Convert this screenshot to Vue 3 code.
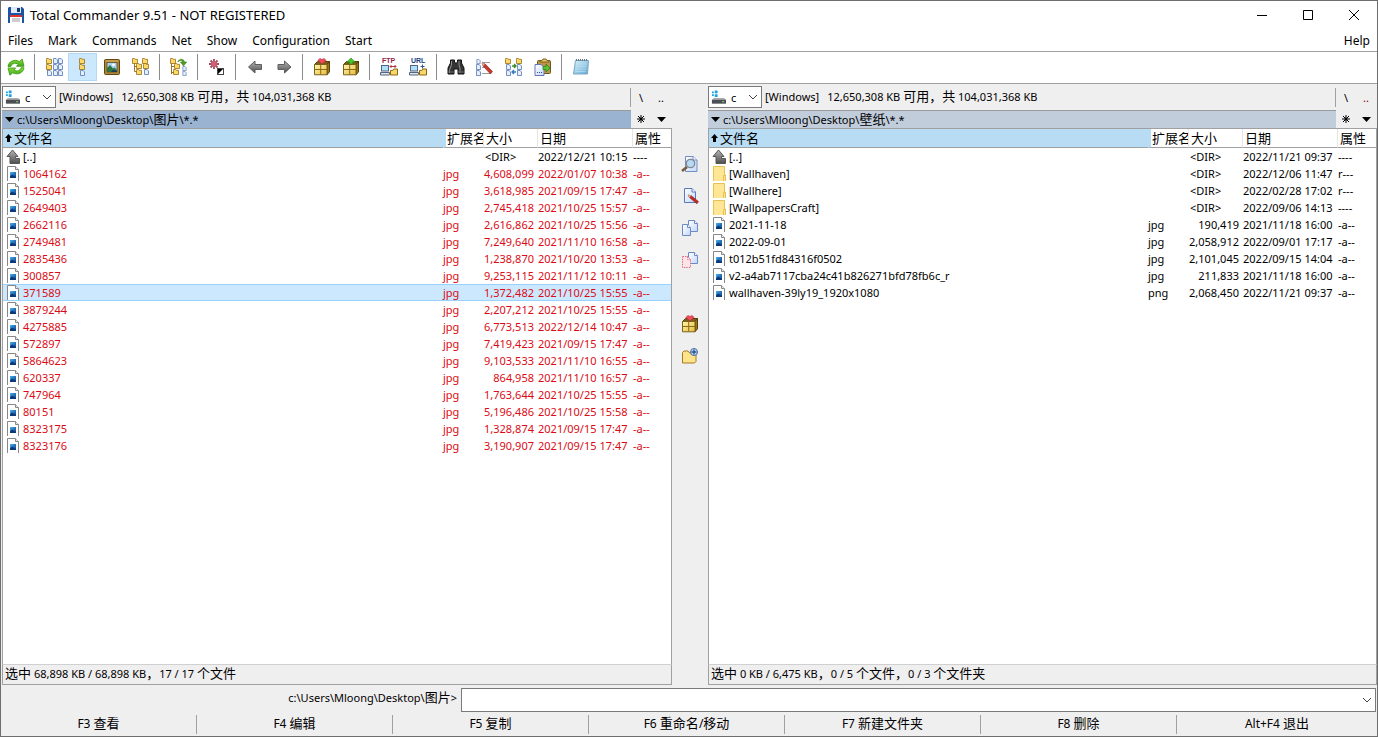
<script setup>
import { h, ref, reactive } from 'vue'

// Renders mixed text: Chinese runs are set slightly larger than Latin ones.
const Mixed = (props) =>
  props.text
    .split(/([\u3000-\u9fff\uff00-\uffef]+)/)
    .filter(Boolean)
    .map((part) => (/[\u3000-\uffef]/.test(part) ? h('span', { class: 'han' }, part) : part))
Mixed.props = ['text']

const menu = ['Files', 'Mark', 'Commands', 'Net', 'Show', 'Configuration', 'Start']

const tools = [
  ['refresh', 'Refresh'], null,
  ['brief', 'Brief view'], ['full', 'Full view'], ['thumbs', 'Thumbnails'], ['tree', 'Tree'], null,
  ['branch', 'Branch view'], null,
  ['invert', 'Invert selection'], null,
  ['back', 'Back'], ['forward', 'Forward'], null,
  ['pack', 'Pack'], ['unpack', 'Unpack'], null,
  ['ftp', 'FTP connect', 'FTP', '#942347'], ['url', 'New URL', 'URL', '#14437f'], null,
  ['search', 'Search'], ['rename', 'Multi-rename'], ['sync', 'Synchronize'], ['clip', 'Copy names'], null,
  ['notepad', 'Notepad'],
]

const L = [
  ['1064162', '4,608,099', '2022/01/07 10:38'],
  ['1525041', '3,618,985', '2021/09/15 17:47'],
  ['2649403', '2,745,418', '2021/10/25 15:57'],
  ['2662116', '2,616,862', '2021/10/25 15:56'],
  ['2749481', '7,249,640', '2021/11/10 16:58'],
  ['2835436', '1,238,870', '2021/10/20 13:53'],
  ['300857', '9,253,115', '2021/11/12 10:11'],
  ['371589', '1,372,482', '2021/10/25 15:55'],
  ['3879244', '2,207,212', '2021/10/25 15:55'],
  ['4275885', '6,773,513', '2022/12/14 10:47'],
  ['572897', '7,419,423', '2021/09/15 17:47'],
  ['5864623', '9,103,533', '2021/11/10 16:55'],
  ['620337', '864,958', '2021/11/10 16:57'],
  ['747964', '1,763,644', '2021/10/25 15:55'],
  ['80151', '5,196,486', '2021/10/25 15:58'],
  ['8323175', '1,328,874', '2021/09/15 17:47'],
  ['8323176', '3,190,907', '2021/09/15 17:47'],
]
const file = (name, ext, size, date) => ({ icon: 'image', name, ext, size, date, attr: '-a--' })
const dir = (icon, name, date, attr) => ({ icon, name, ext: '', size: '<DIR>', date, attr })

const panels = reactive([
  {
    side: 'left', active: true, path: 'c:\\Users\\Mloong\\Desktop\\图片\\*.*', current: 8, marked: true,
    status: '选中 68,898 KB / 68,898 KB，17 / 17 个文件',
    rows: [dir('up', '[..]', '2022/12/21 10:15', '----'), ...L.map((r) => file(r[0], 'jpg', r[1], r[2]))],
  },
  {
    side: 'right', active: false, path: 'c:\\Users\\Mloong\\Desktop\\壁纸\\*.*', current: -1, marked: false,
    status: '选中 0 KB / 6,475 KB，0 / 5 个文件，0 / 3 个文件夹',
    rows: [
      dir('up', '[..]', '2022/11/21 09:37', '----'),
      dir('folder', '[Wallhaven]', '2022/12/06 11:47', 'r---'),
      dir('folder', '[Wallhere]', '2022/02/28 17:02', 'r---'),
      dir('folder', '[WallpapersCraft]', '2022/09/06 14:13', '----'),
      file('2021-11-18', 'jpg', '190,419', '2021/11/18 16:00'),
      file('2022-09-01', 'jpg', '2,058,912', '2022/09/01 17:17'),
      file('t012b51fd84316f0502', 'jpg', '2,101,045', '2022/09/15 14:04'),
      file('v2-a4ab7117cba24c41b826271bfd78fb6c_r', 'jpg', '211,833', '2021/11/18 16:00'),
      file('wallhaven-39ly19_1920x1080', 'png', '2,068,450', '2022/11/21 09:37'),
    ],
  },
])

const side = [['view', 'View'], ['edit', 'Edit'], ['copy', 'Copy'], ['move', 'Move'], null, ['pack', 'Pack'], ['mkdir', 'New folder']]
const keys = ['F3 查看', 'F4 编辑', 'F5 复制', 'F6 重命名/移动', 'F7 新建文件夹', 'F8 删除', 'Alt+F4 退出']
const command = ref('')
</script>

<template>
  <div class="window">
    <svg class="defs" aria-hidden="true">
      <defs>
        <linearGradient id="gGreen" x1="0" y1="0" x2="0" y2="1"><stop offset="0" stop-color="#8be03a" /><stop offset="1" stop-color="#3da714" /></linearGradient>
        <linearGradient id="gGrey" x1="0" y1="0" x2="0" y2="1"><stop offset="0" stop-color="#b5b5b5" /><stop offset="1" stop-color="#4e4e4e" /></linearGradient>
        <linearGradient id="gBox" x1="0" y1="0" x2="1" y2="1"><stop offset="0" stop-color="#fff6ae" /><stop offset="1" stop-color="#e6bc3c" /></linearGradient>
        <linearGradient id="gPage" x1="0" y1="0" x2="1" y2="1"><stop offset="0" stop-color="#fff" /><stop offset="1" stop-color="#c3d8fa" /></linearGradient>
        <linearGradient id="gPhoto" x1="0" y1="0" x2="1" y2="1"><stop offset="0" stop-color="#4ab0f2" /><stop offset="1" stop-color="#0a3c80" /></linearGradient>
        <linearGradient id="gNote" x1="0" y1="0" x2="1" y2="1"><stop offset="0" stop-color="#d8f2fb" /><stop offset="1" stop-color="#62a8d4" /></linearGradient>
      </defs>
      <symbol id="fold" viewBox="0 0 6 6"><path d="M.5 1.500V.500h2l.6.800h2.400v4.200h-5z" fill="#ffd966" stroke="#94701a" stroke-width=".8" /></symbol>
      <symbol id="doc" viewBox="0 0 5 6"><path d="M.5.5h2.600L4.500 2v3.500h-4z" fill="#e6efff" stroke="#5677b4" stroke-width=".8" /></symbol>
      <symbol id="refresh" viewBox="0 0 20 20">
        <path d="M2 9.500C2.500 4.500 8.500 1.500 13.500 4.600L16.200 2 18 9.300H10.400L12.300 7.300C9 5.100 5.600 6.800 4.900 9.500z" fill="url(#gGreen)" stroke="#379217" stroke-width=".8" />
        <path d="M18 10.700C17.500 15.700 11.500 18.500 6.700 15.800L3.900 18.200 2 11h7.600L7.800 13c3.200 2 6.500.6 7.200-2.300z" fill="url(#gGreen)" stroke="#379217" stroke-width=".8" />
      </symbol>
      <symbol id="brief" viewBox="0 0 20 20">
        <path d="M3.500 5v11H6M3.500 10H6" fill="none" stroke="#c29a36" />
        <use href="#fold" x="2" y="1" width="6" height="6" /><use href="#fold" x="2" y="7" width="6" height="6" /><use href="#doc" x="3" y="13" width="5" height="6" />
        <use href="#doc" x="9" y="1" width="5" height="6" /><use href="#doc" x="9" y="7" width="5" height="6" /><use href="#doc" x="9" y="13" width="5" height="6" />
        <use href="#doc" x="14" y="1" width="5" height="6" /><use href="#doc" x="14" y="7" width="5" height="6" /><use href="#doc" x="14" y="13" width="5" height="6" />
      </symbol>
      <symbol id="full" viewBox="0 0 20 20">
        <use href="#fold" x="6" y="1" width="6" height="6" /><use href="#fold" x="6" y="7" width="6" height="6" /><use href="#doc" x="7" y="13" width="5" height="6" />
      </symbol>
      <symbol id="thumbs" viewBox="0 0 20 20">
        <rect x="2.500" y="2.500" width="15" height="15" rx="1" fill="#b0873a" stroke="#634713" /><path d="M4 4h12" stroke="#dfb961" />
        <rect x="5" y="5.500" width="10" height="9.500" fill="#a9d2f0" stroke="#5b431a" stroke-width=".7" />
        <path d="M5 11l3-3 3 3.500 1.500-1L15 13v2H5z" fill="#2c7440" /><path d="M9 15l2-2 4 1v1z" fill="#193762" /><circle cx="11.500" cy="7.800" r="1.400" fill="#fff" />
      </symbol>
      <symbol id="tree" viewBox="0 0 20 20">
        <path d="M3.500 5v9.500h4M3.500 9.500h4M14.500 5v10" fill="none" stroke="#9b7726" />
        <use href="#fold" x="1" y="1" width="6" height="6" /><use href="#fold" x="5" y="6" width="6" height="6" /><use href="#fold" x="5" y="12" width="6" height="6" />
        <use href="#fold" x="11" y="1" width="6" height="6" /><use href="#fold" x="12" y="6" width="6" height="6" /><use href="#doc" x="13" y="12" width="5" height="6" />
      </symbol>
      <symbol id="branch" viewBox="0 0 20 20">
        <path d="M2.500 2v15M2.500 9.500H5M2.500 15.500H5" fill="none" stroke="#927226" />
        <use href="#fold" x="1" y="1" width="6" height="6" /><use href="#fold" x="5" y="6" width="6" height="6" /><use href="#fold" x="4" y="12" width="6" height="6" />
        <path d="M9 4c3-3 6-2 6.500 1h2.200L14.500 9 11.500 5h2C13 3 11 3 9 5z" fill="#4aa01d" stroke="#2f7512" stroke-width=".5" />
        <use href="#doc" x="13" y="9" width="5" height="5" /><use href="#doc" x="13" y="14" width="5" height="5" />
      </symbol>
      <symbol id="invert" viewBox="0 0 20 20">
        <g stroke="#a8485e" stroke-width="1.800"><path d="M7 2v10M2 7h10M3.500 3.500l7 7M10.500 3.500l-7 7" /></g><circle cx="7" cy="7" r="2.800" fill="#cf6177" />
        <rect x="10.500" y="11.500" width="6" height="6" fill="#fff" stroke="#444" /><path d="M11 12h5l-5 5z" />
      </symbol>
      <symbol id="back" viewBox="0 0 20 20"><path d="M3.500 10L10 4v3.500h6.500v5H10V16z" fill="url(#gGrey)" stroke="#5e5e5e" /></symbol>
      <symbol id="forward" viewBox="0 0 20 20"><path d="M17 10l-6.500-6v3.500H4v5h6.500V16z" fill="url(#gGrey)" stroke="#5e5e5e" /></symbol>
      <symbol id="box" viewBox="0 0 20 20">
        <path d="M2.500 7.500l3-3h12l-2.500 3z" fill="#7a6018" stroke="#574109" /><path d="M15 7.500l2.500-3v10.300l-2.500 3z" fill="#9b7418" stroke="#574109" />
        <path d="M2.500 7.500H15v10.300H2.500z" fill="url(#gBox)" stroke="#7d611a" /><path d="M8.700 7.500v10M2.500 12.500H15" stroke="#8b6b18" />
      </symbol>
      <symbol id="pack" viewBox="0 0 20 20"><use href="#box" width="20" height="20" /><path d="M10 7L5.800 3.500 8 1.500l2 1 2-1 2.200 2z" fill="#ef4c5b" stroke="#b92535" stroke-width=".6" /></symbol>
      <symbol id="unpack" viewBox="0 0 20 20"><use href="#box" width="20" height="20" /><path d="M10 1L5.800 5H8.300v2h3.400V5h2.500z" fill="#49c72e" stroke="#27841a" stroke-width=".6" /></symbol>
      <symbol id="net" viewBox="0 0 20 20">
        <rect x="2.500" y="8.500" width="7" height="5.500" fill="#afe0fa" stroke="#55657f" /><path d="M1.500 15.500h9v2.500h-9z" fill="#dce5ee" stroke="#55657f" /><path d="M10 17.500h4" stroke="#bb8e20" />
        <path d="M11.500 13.500h2.200l1-1.500h3.800v6h-7z" fill="#f9d76b" stroke="#876617" />
      </symbol>
      <symbol id="ftp" viewBox="0 0 20 20"><use href="#net" width="20" height="20" /><path d="M11 9.500h6M12.500 8L11 9.500l1.500 1.500M15.500 8L17 9.500 15.500 11" fill="none" stroke="#b43547" /></symbol>
      <symbol id="url" viewBox="0 0 20 20"><use href="#net" width="20" height="20" /><path d="M14.500 7.500v4M12.500 9.500h4" stroke="#36558b" /></symbol>
      <symbol id="search" viewBox="0 0 20 20">
        <path d="M4.500 3h4v2l1 1h1l1-1V3h4v3l2.500 5v6h-6v-5H8v5H2v-6l2.500-5z" fill="#343434" stroke="#111" />
        <path d="M5.500 4v4L3.500 13v3M13 4v4l1 3v5" fill="none" stroke="#8d8d8d" /><path d="M2 15h6M12 15h6" stroke="#666" />
      </symbol>
      <symbol id="rename" viewBox="0 0 20 20">
        <use href="#doc" x="1" y="2" width="5" height="5" /><use href="#doc" x="1" y="7" width="5" height="6" /><use href="#doc" x="1" y="13" width="5" height="6" />
        <path d="M7 5.500h8M7 10.500h4M7 16.500h9" stroke="#9b9b9b" /><path d="M7 6l3 .8 7.500 7.700-2 2.500L8 9z" fill="#c8392c" stroke="#7e2019" stroke-width=".6" /><path d="M7 6l3 .8L8 9z" fill="#f3c39b" />
      </symbol>
      <symbol id="sync" viewBox="0 0 20 20">
        <use href="#fold" x="1" y="1" width="6" height="6" /><use href="#fold" x="12" y="1" width="6" height="6" />
        <use href="#doc" x="2" y="7" width="5" height="6" /><use href="#doc" x="13" y="7" width="5" height="6" /><use href="#doc" x="2" y="13" width="5" height="6" /><use href="#doc" x="13" y="13" width="5" height="6" />
        <path d="M8 9h4M10 7l2 2-2 2" fill="none" stroke="#388c20" stroke-width="1.300" /><path d="M12 15H8M10 13l-2 2 2 2" fill="none" stroke="#347abb" stroke-width="1.300" />
      </symbol>
      <symbol id="clip" viewBox="0 0 20 20">
        <rect x="4.500" y="3.500" width="13" height="13" rx="1" fill="#bd9547" stroke="#6f541f" /><path d="M7 5V3.500h2L10 2h3l1 1.500h2V5z" fill="#ebc772" stroke="#79601e" />
        <path d="M2 7.500h6l3 2.500v8.500H2z" fill="url(#gPage)" stroke="#6676b5" /><path d="M4 15.500h1M6 15.500h1M8 15.500h1" stroke="#334f99" /><path d="M10 9.500h3V7l4 4-4 4v-2.500h-3z" fill="#53c634" stroke="#297d15" stroke-width=".7" />
      </symbol>
      <symbol id="notepad" viewBox="0 0 20 20"><path d="M4.500 3.500h13l-1 13.500H2.500z" fill="url(#gNote)" stroke="#7aa9c6" /><path d="M5.500 4V2M7.500 4V2M9.500 4V2M11.500 4V2M13.500 4V2M15.500 4V2" stroke="#637783" /><path d="M6 7h9.500M5.500 9.500H15M5 12h10M4.500 14.500h10" stroke="#c5e6f4" stroke-width=".6" /></symbol>
      <symbol id="view" viewBox="0 0 20 20">
        <path d="M5.500 2.500H13L17 6v11.500H5.500z" fill="url(#gPage)" stroke="#748dc4" /><path d="M13 2.500V6h4" fill="#fff" stroke="#748dc4" /><path d="M7 13l-5 4" stroke="#785b41" stroke-width="2.600" /><circle cx="10.500" cy="9.500" r="4.200" fill="#b6daf4" stroke="#7f8790" stroke-width="1.300" />
      </symbol>
      <symbol id="edit" viewBox="0 0 20 20"><path d="M4.500 2.500H12L15.500 6v10.500h-11z" fill="url(#gPage)" stroke="#577abb" /><path d="M12 2.500V6h3.500" fill="#fff" stroke="#577abb" /><path d="M8 9l3 .6 7.500 6-1.600 2.200L9.500 11.500z" fill="#c42a24" stroke="#7d211c" stroke-width=".6" /><path d="M8 9l3 .6-1.500 1.900z" fill="#efc69c" /></symbol>
      <symbol id="copy" viewBox="0 0 20 20"><path d="M8.500 2.500h6l3 3v8h-9z" fill="url(#gPage)" stroke="#6c8ac6" /><path d="M2.500 6.500h5l3 3v8h-8z" fill="url(#gPage)" stroke="#6c8ac6" /><path d="M7.500 6.500v3h3M14.500 2.500v3h3" fill="#fff" stroke="#6c8ac6" /></symbol>
      <symbol id="move" viewBox="0 0 20 20"><path d="M8.500 2.500h6l3 3v8h-9z" fill="url(#gPage)" stroke="#6c8ac6" /><path d="M14.500 2.500v3h3" fill="#fff" stroke="#6c8ac6" /><path d="M2.500 6.500h5l3 3v8h-8z" fill="#fce4e9" /><path d="M2.500 6.500h5l3 3v8h-8zM7.500 6.500v3h3" fill="none" stroke="#e36e83" stroke-dasharray="1.500 1" /></symbol>
      <symbol id="mkdir" viewBox="0 0 20 20"><path d="M2.500 6.500L4 5h4l1.500 2H16v8.500l-1.500 1.500h-12z" fill="#fde38a" stroke="#a67b22" /><circle cx="14" cy="6" r="3.500" fill="#c6ddf7" stroke="#46689d" /><path d="M14 3.500v5M11.500 6h5" stroke="#294f8d" stroke-width="1.300" /></symbol>
      <symbol id="up" viewBox="0 0 16 16"><path d="M6.500 1L1 7.500h3v7h9.500v-5H9.500v-2H12z" fill="url(#gGrey)" stroke="#555" /></symbol>
      <symbol id="folder" viewBox="0 0 16 16"><path d="M1.500.500h11V9h1v6.500h-12z" fill="#ffe694" stroke="#e6c256" /><path d="M11.500 15V9.500h2" fill="none" stroke="#e6c256" /></symbol>
      <symbol id="image" viewBox="0 0 16 16"><path d="M1.500.500h8l3 3v12h-11z" fill="#fff" stroke="#888" /><path d="M9.500.500v3h3" fill="#eee" stroke="#888" /><path d="M4 6h6v6H4z" fill="url(#gPhoto)" /><path d="M4 10.500l2-2 4 2.500v1H4z" fill="#0b3978" /></symbol>
      <symbol id="chev" viewBox="0 0 10 10"><path d="M1 3l4 4 4-4" fill="none" stroke="#444" /></symbol>
    </svg>

    <header class="title">
      <svg class="logo" viewBox="0 0 16 16" aria-hidden="true"><path d="M1 0h13l2 2v14H0V1z" fill="#1b53a7" /><path d="M3 0h10v6H3z" fill="#dfe9f5" /><path d="M9 1h3v4H9z" fill="#16386f" /><path d="M2 8h12v8H2z" fill="#fff" /><path d="M2 8h12v2H2z" fill="#d5352c" /><path d="M4 12h8M4 14h8" stroke="#999" /></svg>
      <h1>Total Commander 9.51 - NOT REGISTERED</h1>
      <div class="controls">
        <button type="button" aria-label="Minimize"><svg viewBox="0 0 12 12"><path d="M1 6.500h10" /></svg></button>
        <button type="button" aria-label="Maximize"><svg viewBox="0 0 12 12"><path d="M1.500 1.500h9v9h-9z" /></svg></button>
        <button type="button" aria-label="Close"><svg viewBox="0 0 12 12"><path d="M1 1l10 10M11 1L1 11" /></svg></button>
      </div>
    </header>

    <nav class="menu">
      <button v-for="m in menu" :key="m" type="button">{{ m }}</button>
      <button type="button" class="help">Help</button>
    </nav>

    <div class="toolbar" role="toolbar">
      <template v-for="(t, i) in tools" :key="i">
        <button v-if="t" type="button" :aria-label="t[1]" :class="{ on: t[0] === 'full' }">
          <svg class="ic" viewBox="0 0 20 20"><use :href="'#' + t[0]" width="20" height="20" /><text v-if="t[2]" x="3" y="6" class="iconText" :fill="t[3]">{{ t[2] }}</text></svg>
        </button>
        <span v-else class="sep"></span>
      </template>
    </div>

    <main class="work">
      <section v-for="p in panels" :key="p.side" class="panel" :class="[p.side, { active: p.active, marked: p.marked }]">
        <div class="drive">
          <label class="combo">
            <svg class="disk" viewBox="0 0 16 14" aria-hidden="true"><path d="M1 1h2v2H1zM4 0h3v3H4zM1 4h2v2H1zM4 4h3v3H4z" fill="#1ba1e2" /><path d="M3 8h11l2 2v4H1v-4z" fill="#a9adb0" /><path d="M1 10h15v4H1z" fill="#4c4f52" /><path d="M12 12h2" stroke="#8cf08c" /></svg>
            <select aria-label="Drive"><option>c</option></select>
            <svg class="chev"><use href="#chev" /></svg>
          </label>
          <span class="space"><span>[Windows]</span><Mixed text="12,650,308 KB 可用，共 104,031,368 KB" /></span>
          <span class="jump"><button type="button">\</button><button type="button" class="dots">..</button></span>
        </div>
        <div class="pathrow">
          <div class="path"><svg class="tri" viewBox="0 0 9 5"><path d="M0 0h9L4.500 5z" /></svg><span><Mixed :text="p.path" /></span></div>
          <button type="button" aria-label="Favorites"><svg class="star" viewBox="0 0 8 8"><path d="M4 0v8M0 4h8M1 1l6 6M7 1L1 7" /><circle cx="4" cy="4" r="1" /></svg></button>
          <button type="button" aria-label="History"><svg class="tri" viewBox="0 0 9 5"><path d="M0 0h9L4.500 5z" /></svg></button>
        </div>
        <div class="list">
          <table>
            <colgroup><col /><col class="cExt" /><col class="cSize" /><col class="cDate" /><col class="cAttr" /></colgroup>
            <thead>
              <tr>
                <th class="name"><svg class="sort" viewBox="0 0 7 9"><path d="M3.500 0L7 4H5v4H2V4H0z" /></svg>文件名</th>
                <th class="ext">扩展名</th><th>大小</th><th>日期</th><th>属性</th>
              </tr>
            </thead>
            <tbody>
              <tr v-for="(r, i) in p.rows" :key="r.name" :class="{ current: i === p.current, file: r.icon === 'image' }">
                <td class="name"><svg class="fi"><use :href="'#' + r.icon" /></svg>{{ r.name }}</td>
                <td>{{ r.ext }}</td>
                <td :class="r.icon === 'image' ? 'num' : 'dir'">{{ r.size }}</td>
                <td>{{ r.date }}</td>
                <td>{{ r.attr }}</td>
              </tr>
            </tbody>
          </table>
        </div>
        <footer class="status"><Mixed :text="p.status" /></footer>
      </section>

      <aside class="middle">
        <template v-for="(s, i) in side" :key="i">
          <button v-if="s" type="button" :aria-label="s[1]"><svg class="ic"><use :href="'#' + s[0]" /></svg></button>
          <span v-else class="gap"></span>
        </template>
      </aside>
    </main>

    <div class="cmd">
      <label for="cmdline"><Mixed text="c:\Users\Mloong\Desktop\图片>" /></label>
      <div class="cmdbox">
        <input id="cmdline" v-model="command" type="text" />
        <button type="button" aria-label="Command history"><svg class="chev"><use href="#chev" /></svg></button>
      </div>
    </div>

    <div class="keys">
      <button v-for="k in keys" :key="k" type="button"><Mixed :text="k" /></button>
    </div>
  </div>
</template>

<style>
body { background: #f0eff0; }
.han { font-size: 13px; }
</style>

<style scoped>
.window {
  box-sizing: border-box;
  min-height: 100vh;
  display: flex;
  flex-direction: column;
  border: 1px solid #6e6e6e;
  background: #f0eff0;
  color: #000;
  font-family: "Noto Sans", "Noto Sans CJK SC", sans-serif;
  font-size: 12px;
  line-height: 17px;
}
.window * { box-sizing: border-box; }
button { border: 0; padding: 0; margin: 0; background: none; color: inherit; font: inherit; }
svg { display: block; flex: none; }
.defs { position: absolute; width: 0; height: 0; }
.iconText { font: bold 7px "Liberation Sans", sans-serif; }

.title { display: flex; align-items: center; height: 28px; background: #fff; padding-left: 7px; }
.logo { width: 16px; height: 16px; }
h1 { margin: 0 0 0 6px; font-size: 13px; font-weight: 400; }
.controls { margin-left: auto; display: flex; }
.controls button { width: 46px; height: 28px; display: flex; align-items: center; justify-content: center; }
.controls svg { width: 12px; height: 12px; fill: none; stroke: #000; }

.menu { display: flex; gap: 15px; height: 23px; padding: 0 7px; background: #fff; border-bottom: 1px solid #a0a0a0; }
.menu .help { margin-left: auto; }

.toolbar { display: flex; align-items: center; height: 32px; padding-bottom: 1px; background: #fff; border-bottom: 1px solid #a0a0a0; }
.toolbar button { width: 29px; height: 28px; display: flex; align-items: center; justify-content: center; border: 1px solid transparent; }
.toolbar .on { background: #cce8ff; border-color: #b3d9f7; }
.ic { width: 20px; height: 20px; }
.sep { width: 9px; height: 26px; background: linear-gradient(#8c8c8c, #8c8c8c) center / 1px 100% no-repeat; }

.work { flex: 1; display: grid; grid-template-columns: 670fr 36px 669fr; padding-left: 1px; }
.panel { display: flex; flex-direction: column; min-width: 0; grid-row: 1; }
.left { grid-column: 1; }
.right { grid-column: 3; }
.middle { grid-column: 2; grid-row: 1; }

.drive { display: flex; align-items: center; height: 26px; font-size: 11px; }
.combo { display: flex; align-items: center; width: 54px; height: 22px; padding: 0 3px 0 2px; border: 1px solid #7a7a7a; background: #fff; }
.disk { width: 15px; height: 14px; }
.combo select { flex: 1; min-width: 0; appearance: none; border: 0; padding: 0 0 0 5px; background: none; font: inherit; color: inherit; }
.chev { width: 10px; height: 10px; }
.space { flex: 1; padding: 0 0 2px 3px; white-space: pre; }
.space > span:first-child { margin-right: 8px; }
.jump { display: flex; width: 42px; height: 19px; border-left: 1px solid #a0a0a0; }
.jump button { width: 20px; }
.right .dots { color: #8b0000; }

.pathrow { display: flex; height: 18px; font-size: 11px; }
.path { flex: 1; display: flex; align-items: center; padding: 0 0 1px 3px; border-top: 1px solid #9a9a9a; background: #c1cddb; white-space: pre; }
.active .path { background: #9ab3d1; }
.path .tri { margin-right: 3px; }
.pathrow button { width: 20px; display: flex; align-items: center; justify-content: center; }
.pathrow button:last-child { width: 21px; }
.tri { width: 9px; height: 5px; }
.star { width: 8px; height: 8px; stroke: #000; }

.list { flex: 1; background: #fff; border: 1px solid #a0a0a0; border-bottom: 0; }
table { width: 100%; table-layout: fixed; border-collapse: separate; border-spacing: 0; font-size: 11px; }
.cExt { width: 41px; }
.cSize { width: 54px; }
.cDate { width: 95px; }
.cAttr { width: 38px; }
th { height: 19px; padding: 0 0 0 2px; text-align: left; font-size: 13px; font-weight: 400; line-height: 18px; overflow: hidden; white-space: nowrap; border-bottom: 1px solid #a0a0a0; border-right: 1px solid #e5e5e5; }
th:last-child { border-right: 0; }
th.name { background: #b9dcf5; border-right: 0; }
th.ext { border-left: 3px solid #b9dcf5; padding-left: 1px; }
.sort { display: inline-block; width: 7px; height: 9px; margin-right: 2px; }
td { height: 17px; padding: 0; line-height: 15px; white-space: pre; border: solid transparent; border-width: 1px 0; }
td.name { display: flex; align-items: center; overflow: hidden; }
.fi { width: 16px; height: 16px; margin: 0 1px 0 3px; }
.num { text-align: right; padding-right: 4px; }
.dir { padding-left: 1px; }
.marked .file { color: #dc0a14; }
.current td { background: #cce8ff; border-color: #99d1ff; }

.status { height: 21px; padding: 0 2px; border: 1px solid #a0a0a0; border-top-color: #d0d0d0; font-size: 11px; line-height: 17px; white-space: pre; }

.middle { display: flex; flex-direction: column; align-items: center; padding-top: 64px; }
.middle button { width: 32px; height: 32px; display: flex; align-items: center; justify-content: center; }
.gap { height: 32px; }

.cmd { display: grid; grid-template-columns: 460fr 916fr; height: 27px; padding-top: 3px; }
.cmd label { padding: 1px 4px 0 0; text-align: right; font-size: 11px; }
.cmdbox { display: flex; margin-right: 1px; border: 1px solid #7a7a7a; background: #fff; }
.cmdbox input { flex: 1; min-width: 0; border: 0; padding: 0 4px; background: none; outline: 0; font: inherit; }
.cmdbox button { width: 17px; display: flex; align-items: center; justify-content: center; }

.keys { display: grid; grid-template-columns: repeat(6, 196fr) 200fr; height: 24px; padding: 3px 0 2px; }
.keys button { border-right: 1px solid #a0a0a0; padding-bottom: 2px; line-height: 17px; }
.keys button:last-child { border-right: 0; }
</style>
